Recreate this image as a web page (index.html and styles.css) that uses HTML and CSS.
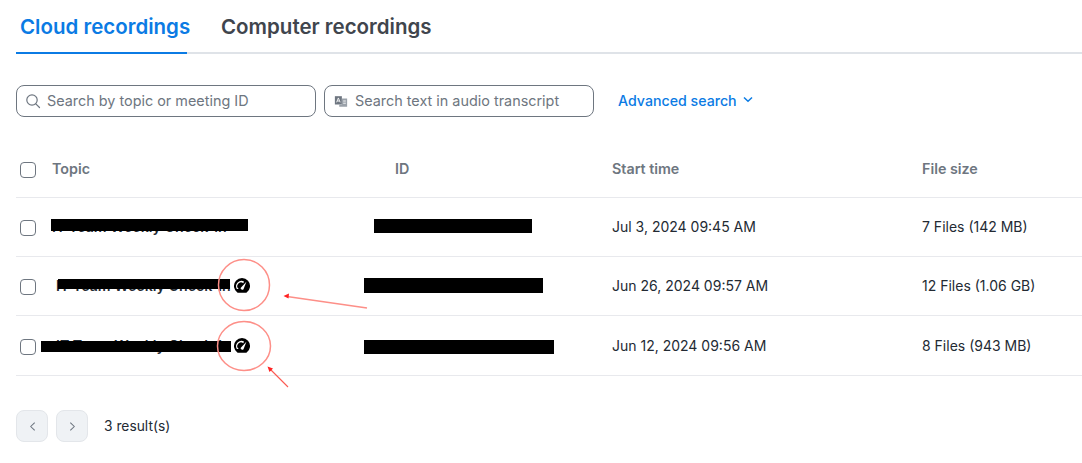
FILE: index.html
```html
<!DOCTYPE html>
<html lang="en">
<head>
<meta charset="utf-8">
<title>Recordings</title>
<link rel="stylesheet" href="styles.css">
</head>
<body>
<main class="page">
  <nav class="tabs">
    <a class="tab tab-active">Cloud recordings</a>
    <a class="tab">Computer recordings</a>
  </nav>
  <div class="filters">
    <label class="search search-topic">
      <svg class="search-icon" viewBox="0 0 16 16" width="16" height="16"><circle cx="7" cy="7" r="5.2" fill="none" stroke="#6e7680" stroke-width="1.2"/><path d="M10.8 10.8L14.5 14.5" stroke="#6e7680" stroke-width="1.2" fill="none" stroke-linecap="round"/></svg>
      <span>Search by topic or meeting ID</span>
    </label>
    <label class="search search-text">
      <svg class="search-icon" viewBox="0 0 16 16" width="14" height="14"><path d="M1 2.5h8v9.5H1z" fill="#6e7680"/><path d="M9 5h6v9.5H6V12h3z" fill="#9aa1a9"/><path d="M3 9.500L5 4.500L7 9.500M3.800 8h2.400" fill="none" stroke="#fff" stroke-width="1"/><path d="M10.500 8h3M10.500 10.500h3" stroke="#fff" stroke-width="1"/></svg>
      <span>Search text in audio transcript</span>
    </label>
    <a class="advanced">Advanced search
      <svg viewBox="0 0 10 6" width="10" height="7"><path d="M1 1l4 3.800L9 1" fill="none" stroke="#0b7be4" stroke-width="1.500"/></svg>
    </a>
  </div>
  <section class="table">
    <div class="row head">
      <span class="check"></span><span class="c-topic">Topic</span><span class="c-id">ID</span><span>Start time</span><span>File size</span>
    </div>
    <div class="row">
      <span class="check"></span>
      <span class="c-topic cell-topic">IT Team Weekly Check-in<i class="mask mask-t1"></i></span>
      <span class="c-id"><i class="mask mask-i1"></i></span>
      <span>Jul 3, 2024 09:45 AM</span>
      <span>7 Files (142 MB)</span>
    </div>
    <div class="row">
      <span class="check"></span>
      <span class="c-topic cell-topic nudge">IT Team Weekly Check-in<i class="mask mask-t2"></i></span>
      <span class="c-id"><i class="mask mask-i2"></i></span>
      <span>Jun 26, 2024 09:57 AM</span>
      <span>12 Files (1.06 GB)</span>
    </div>
    <div class="row row-last">
      <span class="check"></span>
      <span class="c-topic cell-topic nudge">IT Team Weekly Check-in<i class="mask mask-t3"></i></span>
      <span class="c-id"><i class="mask mask-i3"></i></span>
      <span>Jun 12, 2024 09:56 AM</span>
      <span>8 Files (943 MB)</span>
    </div>
  </section>
  <footer class="pager">
    <button class="page-btn"><svg viewBox="0 0 8 12" width="7" height="11"><path d="M6.500 1.500L2 6l4.500 4.500" fill="none" stroke="#6e7680" stroke-width="1.200"/></svg></button>
    <button class="page-btn"><svg viewBox="0 0 8 12" width="7" height="11"><path d="M1.500 1.500L6 6l-4.500 4.500" fill="none" stroke="#6e7680" stroke-width="1.200"/></svg></button>
    <span class="results">3 result(s)</span>
  </footer>
  <svg class="gauge gauge-a" viewBox="0 0 16 16" width="16" height="16"><use href="#gauge"/></svg>
  <svg class="gauge gauge-b" viewBox="0 0 16 16" width="16" height="16"><use href="#gauge"/></svg>
  <svg class="marks" viewBox="0 0 1082 463" width="1082" height="463">
    <defs>
      <g id="gauge"><path d="M3.600 14.800A8 8 0 1 1 12.400 14.800Z" fill="#000"/><path d="M2.800 11A5.500 5.500 0 0 1 10 3.400L9.300 5.300A3.500 3.500 0 0 0 4.700 11ZM6.600 10L12.400 3.800 9.500 11.200A1.700 1.700 0 0 1 6.600 10Z" fill="#fff"/></g>
    </defs>
    <g fill="none" stroke="#fd8f88" stroke-width="1.500">
      <circle cx="244" cy="285" r="25.500"/>
      <ellipse cx="244" cy="346" rx="26.500" ry="24.500"/>
      <path d="M367 308L287 296.500"/>
    </g>
    <path d="M288 387L270 369" fill="none" stroke="#fb5a52" stroke-width="1.100"/>
    <path d="M283.500 296L289 293.500L288.500 298.500Z" fill="#f22"/>
    <path d="M267.500 366.500L273 368.500L269.500 372Z" fill="#f22"/>
  </svg>
</main>
</body>
</html>
```
FILE: styles.css
```css
* { box-sizing: border-box; }
html, body { margin: 0; padding: 0; background: #fff; }
body { font-family: Inter, "Liberation Sans", sans-serif; color: #232a33; overflow: hidden; }
.page { position: relative; width: 1082px; height: 463px; padding: 0 0 0 16px; }

.tabs { display: flex; gap: 32px; height: 54px; border-bottom: 2px solid #dfe3e8; }
.tab { height: 54px; padding: 15px 0 0 4px; font-size: 20.5px; line-height: 24px; font-weight: 600; color: #40454d; white-space: nowrap; }
.tab-active { width: 171px; color: #0b7be4; border-bottom: 2px solid #0b7be4; }
.tab + .tab { padding-left: 2px; }

.filters { display: flex; align-items: center; margin-top: 31px; height: 32px; }
.search { display: flex; align-items: center; height: 32px; border: 1px solid #6e7680; border-radius: 8px; font-size: 14.4px; line-height: 28px; color: #6e7680; }
.search span { margin-top: -1px; }
.search-topic { width: 300px; padding-left: 8px; gap: 6px; }
.search-text { width: 270px; margin-left: 8px; padding-left: 9px; gap: 7px; }
.advanced { display: flex; align-items: center; gap: 6px; margin-left: 24px; margin-top: -1px; font-size: 14.2px; font-weight: 500; color: #0b7be4; }
.advanced svg { margin-top: -2px; }

.table { margin-top: 22px; width: 1066px; }
.row { display: grid; grid-template-columns: 36px 343px 217px 310px 1fr; align-items: center; height: 59px; border-bottom: 1px solid #e8e9ed; font-size: 14px; line-height: 18px; color: #232a33; }
.row > .check { margin: 2px 0 0 4px; }
.row.head { height: 59px; padding-top: 1px; font-size: 14.3px; font-weight: 600; color: #6e7680; }
.row-last { height: 60px; }
.check { display: block; width: 16px; height: 16px; border: 1px solid #6e7680; border-radius: 4px; background: #fff; }
.cell-topic { position: relative; font-weight: 600; font-size: 14.2px; white-space: nowrap; }
.nudge { padding-left: 4px; }
.mask { position: absolute; display: block; background: #000; }
.c-id { position: relative; height: 100%; }
.head .c-id { height: auto; }
.mask-t1 { left: -1px; top: 1px; width: 197px; height: 12px; }
.mask-t2 { left: 6px; top: 2px; width: 172px; height: 10px; }
.mask-t3 { left: -11px; top: 4px; width: 190px; height: 11px; }
.mask-i1 { left: -21px; top: 20.500px; width: 158px; height: 14px; }
.mask-i2 { left: -31px; top: 20.500px; width: 179px; height: 15px; }
.mask-i3 { left: -31px; top: 23.500px; width: 190px; height: 14px; }

.pager { display: flex; align-items: center; gap: 8px; margin-top: 34px; height: 32px; }
.page-btn { display: flex; align-items: center; justify-content: center; width: 32px; height: 32px; padding: 0; background: #eff2f5; border: 1px solid #e3e6ea; border-radius: 8px; }
.results { margin-left: 8px; font-size: 13.800px; color: #232a33; }

.gauge { position: absolute; }
.gauge-a { left: 234px; top: 278px; }
.gauge-b { left: 234px; top: 338px; }
.marks { position: absolute; left: 0; top: 0; pointer-events: none; }
```
